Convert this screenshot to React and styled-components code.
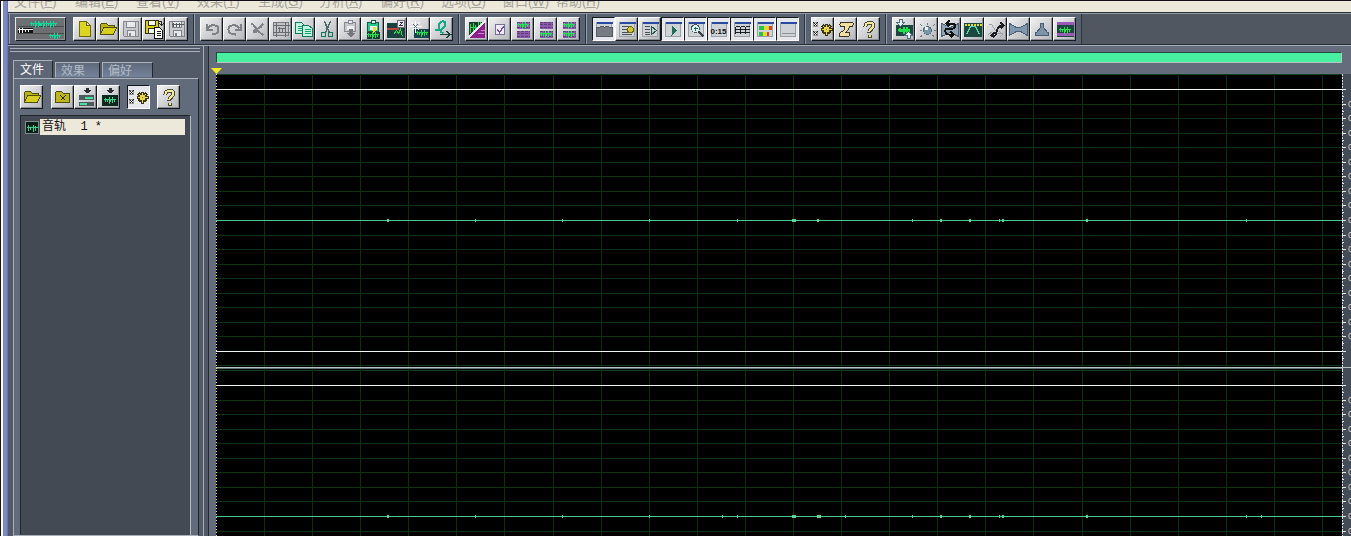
import React from "react";
import styled, { createGlobalStyle } from "styled-components";

const GlobalStyle = createGlobalStyle`
  * {
    box-sizing: border-box;
  }
  body {
    margin: 0;
    overflow: hidden;
    background: #505864;
    font-family: "Liberation Sans", "Noto Sans CJK SC", sans-serif;
  }
  button {
    margin: 0;
    padding: 0;
    border: none;
    font-family: inherit;
  }
`;

const Window = styled.div`
  display: flex;
  flex-direction: column;
  height: 100vh;
  overflow: hidden;
  border-top: 1px solid #14101c;
  border-left: 1px solid #14101c;
`;
const Body = styled.div`
  flex: 1;
  display: flex;
  min-height: 0;
`;
const Frame = styled.div`
  width: 7px;
  flex-shrink: 0;
  background-color: #7d87c6;
  border-left: 2px solid #ffffff;
  border-right: 1px solid #6a72ac;
`;
const Main = styled.div`
  flex: 1;
  min-width: 0;
  display: flex;
  flex-direction: column;
`;

const MenuBar = styled.nav`
  display: flex;
  align-items: flex-end;
  height: 12px;
  flex-shrink: 0;
  overflow: hidden;
  padding: 0 0 1px 6px;
  background-color: #ece8da;
  border-bottom: 1px solid #2c3038;
`;
const MenuItem = styled.button`
  width: ${(props) => (props.$narrow ? 54 : 61)}px;
  flex-shrink: 0;
  background: none;
  color: #a5a299;
  font-size: 13px;
  line-height: 18px;
  text-align: left;
  white-space: nowrap;
`;

const Toolbar = styled.div`
  display: flex;
  flex-shrink: 0;
  padding-left: 1px;
  background-color: #505760;
  border-top: 1px solid #9299a3;
  border-bottom: 1px solid #2b3038;
`;
const ToolGroup = styled.div`
  display: flex;
  padding: 3px 5px;
  background-color: #586270;
  border-left: 1px solid #9099a6;
  border-right: 1px solid #2f353f;
`;
const ToolButton = styled.button`
  display: flex;
  align-items: center;
  justify-content: center;
  width: 23px;
  height: 24px;
  flex-shrink: 0;
  margin-right: ${(props) => props.$gap || 0}px;
  background: ${(props) =>
    props.$pressed ? "#e6e7ec" : "linear-gradient(135deg, #f1f1f2, #b3b6ba)"};
  border: 1px solid;
  border-color: ${(props) =>
    props.$pressed
      ? "#15181d #ffffff #ffffff #15181d"
      : "#ffffff #15181d #15181d #ffffff"};
  box-shadow: ${(props) =>
    props.$pressed ? "none" : "inset -1px -1px 0 #8d9197"};
`;
const SessionButton = styled(ToolButton)`
  width: 51px;
  margin-right: 7px;
  background: #6d6f72;
  border-color: #e4e6e8 #15181d #15181d #e4e6e8;
`;

const Workspace = styled.div`
  flex: 1;
  display: flex;
  min-height: 0;
  border-top: 1px solid #a3abb5;
`;
const Sidebar = styled.aside`
  display: flex;
  flex-direction: column;
  width: 196px;
  flex-shrink: 0;
  padding-top: 2px;
  background-color: #515a66;
  border-right: 1px solid #a9b0ba;
`;
const Grip = styled.div`
  height: 4px;
  margin: 0 3px 8px 2px;
  border-top: 1px solid #a9b0ba;
  border-bottom: 1px solid #a9b0ba;
`;
const Tabs = styled.div`
  display: flex;
  align-items: flex-end;
  gap: 2px;
  padding-left: 5px;
`;
const Tab = styled.button`
  width: ${(props) => props.$width}px;
  height: ${(props) => (props.$active ? 19 : 16)}px;
  margin-bottom: ${(props) => (props.$active ? -1 : 0)}px;
  padding-left: ${(props) => (props.$active ? 6 : 5)}px;
  color: ${(props) => (props.$active ? "#ffffff" : "#b3bcc8")};
  background: ${(props) =>
    props.$active ? "#5d6675" : "linear-gradient(#5f6a7b, #75829a)"};
  border: 1px solid;
  border-color: #a9b0ba #22272f transparent #a9b0ba;
  font-size: 12px;
  line-height: 16px;
  text-align: left;
`;
const Panel = styled.div`
  flex: 1;
  display: flex;
  flex-direction: column;
  min-height: 0;
  margin: 0 4px 0 5px;
  padding: 6px 7px 0 6px;
  background-color: #616b79;
  border: 1px solid;
  border-color: #a9b0ba #1d2229 #a9b0ba #a9b0ba;
`;
const PanelTools = styled.div`
  display: flex;
  margin-bottom: 6px;
`;
const FileList = styled.div`
  flex: 1;
  padding: 3px 5px 0 4px;
  background-color: #434a53;
  border-top: 1px solid #20252c;
  border-left: 1px solid #20252c;
  border-right: 1px solid #b4bac2;
`;
const FileRow = styled.div`
  display: flex;
  align-items: center;
  gap: 1px;
`;
const FileName = styled.span`
  flex: 1;
  height: 16px;
  padding-left: 2px;
  background-color: #ece8da;
  color: #111111;
  font-family: "Liberation Mono", "Noto Sans CJK SC", monospace;
  font-size: 12px;
  line-height: 17px;
  white-space: pre;
`;
const Splitter = styled.div`
  width: 5px;
  flex-shrink: 0;
  background-color: #505865;
  border-right: 1px solid #23282f;
`;

const Editor = styled.main`
  flex: 1;
  min-width: 0;
  display: flex;
  flex-direction: column;
  background-color: #656d7d;
`;
const Overview = styled.div`
  height: 11px;
  flex-shrink: 0;
  margin: 6px 9px 0 7px;
  background-color: #47f0a1;
  border: 1px solid;
  border-color: #23483c #b7c4c0 #b7c4c0 #23483c;
`;
const MarkerRow = styled.div`
  display: flex;
  align-items: flex-end;
  height: 11px;
  flex-shrink: 0;
  padding-left: 2px;
`;
const Tracks = styled.div`
  flex: 1;
  min-height: 0;
  overflow: hidden;
  padding-left: 7px;
`;
const Track = styled.div`
  display: flex;
  height: 296px;
`;
const Wave = styled.svg`
  flex: 1;
  min-width: 0;
  height: 100%;
  background-color: #000000;
`;
const Scale = styled.svg`
  width: 9px;
  flex-shrink: 0;
  height: 100%;
  background-color: #434b56;
`;

const dark = "#173f34";
const green = "#18a26c";
const yellow = "#d5cf16";

// a short burst of waveform centred on y
const burst = (x, y) =>
  `M${x} ${y}h12M${x + 2} ${y - 2}v4M${x + 4} ${y - 1}v3M${x + 6} ${y - 3}v7M${
    x + 7
  } ${y - 1}v3M${x + 9} ${y - 3}v6M${x + 11} ${y - 1}v3`;

const FolderShape = () => (
  <>
    <path d="M2 15V5l1-1h5l2 2h6v3" fill="#b9b411" stroke="#504d0b" />
    <path d="M2 15l3-7h13l-3 7z" fill="#d6d01d" stroke="#504d0b" />
  </>
);
const Floppy = ({ fill, stroke }) => (
  <>
    <path d="M2 2h15v15H3l-1-1z" fill={fill} stroke={stroke} />
    <path d="M5 2h9v6H5zM6 11h8v6H6z" fill="#e8e9eb" stroke={stroke} />
    <path d="M8 13v3" stroke={stroke} strokeWidth="2" />
  </>
);
const MiniWindow = ({ children }) => (
  <>
    <path d="M2 3h15v14H2z" fill="#d0d3d6" stroke="#9ba0a7" />
    <path d="M2 2h16v2H2z" fill="#284aa0" />
    {children}
  </>
);
const Bricks = ({ top, bottom }) => (
  <>
    <path d="M3 2h13v7H3zM3 11h13v7H3z" fill="#8a5baa" />
    <path
      d="M3 3h13M3 5h13M3 8h13M3 12h13M3 14h13M3 17h13"
      stroke="#5f3a7d"
      strokeDasharray="3 1"
    />
    {top && <path d={burst(3, 5)} stroke="#20e450" />}
    {bottom && <path d={burst(3, 14)} stroke="#20e450" />}
  </>
);
const Gear = () => (
  <>
    <path d="M0 3h4v4H0zM0 12h4v4H0z" fill="#fff" stroke="#999" />
    <path d="M0 3l4 4m0-4l-4 4M0 12l4 4m0-4l-4 4" stroke="#222" />
    <path
      d="M13 4v12M7 10h12M9 6l8 8M9 14l8-8"
      stroke="#3d360e"
      strokeWidth="3"
    />
    <path d="M13 5v10M8 10h10M10 7l6 6M10 13l6-6" stroke="#e9da45" />
    <circle cx="13" cy="10" r="3" fill="#e9da45" />
    <circle cx="13" cy="10" r="1" fill="#7a6d1d" />
  </>
);
const HelpShape = () => (
  <>
    <path
      d="M6 7c0-5 8-5 8-1 0 3-4 3-4 7M10 15v3"
      stroke="#4b4830"
      strokeWidth="4"
    />
    <path
      d="M6 7c0-5 8-5 8-1 0 3-4 3-4 6M10 15v2"
      stroke="#f0e99c"
      strokeWidth="2"
    />
  </>
);
const Clipboard = ({ fill, stroke }) => (
  <>
    <path d="M4 3h11v9H4z" fill={fill} stroke={stroke} />
    <path d="M8 1h4v3H8z" fill="#eef" stroke={stroke} />
    <path d="M6 6h7v4H6z" fill="#eee" />
  </>
);

const icons = {
  newFile: (
    <path d="M4 2h7l4 4v11H4zM11 2v4h4" fill="#dcd51c" stroke="#6c690d" />
  ),
  open: <FolderShape />,
  save: <Floppy fill="#c6c8cb" stroke="#85898f" />,
  saveAs: (
    <>
      <path d="M1 1h13v13H1z" fill={yellow} stroke="#35340e" />
      <path d="M4 1h7v5H4zM4 9h6v5H4z" fill="#f5f5f5" stroke="#35340e" />
      <path d="M10 8h5l3 3v8h-8z" fill="#fff" stroke="#111" />
      <path d="M12 12h4M12 14h4M12 16h4M14 2h3v4M15 4l2 2 2-2" stroke="#222" />
    </>
  ),
  saveAll: (
    <>
      <Floppy fill="#c9cbce" stroke="#7d8187" />
      <path d="M4 5h12M6 3v4M9 3v4M12 3v4" stroke="#555960" />
    </>
  ),
  undo: (
    <path
      d="M4 4v6h6M5 9c3-5 11-4 11 1 0 4-4 5-7 5"
      stroke="#7e8287"
      strokeWidth="2"
    />
  ),
  redo: (
    <path
      d="M15 4v6H9M14 9c-3-5-11-4-11 1 0 4 4 5 7 5"
      stroke="#7e8287"
      strokeWidth="2"
    />
  ),
  repeat: (
    <path
      d="M2 4c4 0 4 5 7 5 3 0 4-4 6-5M13 7L6 11c-2 2 1 3 3 0l6 5"
      stroke="#7e8287"
      strokeWidth="2"
    />
  ),
  trim: (
    <>
      <path d="M2 3h15v13H2z" fill="#bfc1c4" stroke="#777b81" />
      <path
        d="M1 6h17M1 13h17M5 2v15M14 2v15M6 9h8M8 7v5M11 8v4"
        stroke="#686c72"
      />
    </>
  ),
  copy: (
    <>
      <path d="M1 3h6l3 3v8H1z" fill="#c4f4e4" stroke="#127a5a" />
      <path d="M3 7h5M3 9h5M3 11h5" stroke={green} />
      <path d="M8 6h6l4 3v8H8z" fill="#c4f4e4" stroke="#127a5a" />
      <path d="M10 10h6M10 12h6M10 14h6" stroke={green} />
    </>
  ),
  cut: (
    <>
      <path d="M7 2l5 11M13 2L8 13" stroke="#48676a" strokeWidth="1.5" />
      <circle cx="6" cy="15" r="2.2" stroke="#14745a" strokeWidth="1.5" />
      <circle cx="13" cy="15" r="2.2" stroke="#14745a" strokeWidth="1.5" />
    </>
  ),
  paste: (
    <>
      <Clipboard fill="#c6c8cb" stroke="#85898f" />
      <path d="M8 9h4v4h3l-5 5-5-5h3z" fill="#74787e" />
    </>
  ),
  pasteNew: (
    <>
      <Clipboard fill="#28c98e" stroke="#125c44" />
      <path d="M3 12h13v7H3z" fill={dark} />
      <path d="M9 7h3v3h2l-4 3-3-3h2z" fill="#e8dd31" />
      <path d={burst(3, 15)} stroke="#22df4b" />
    </>
  ),
  mixPaste: (
    <>
      <path d="M0 3h18v15H0z" fill="#19423e" />
      <path d="M0 9h12" stroke="#b94639" strokeWidth="2" />
      <path d="M7 15l3-4 2 3 2-4 2 7" stroke="#26da50" />
      <path d="M11 1h7v7h-7z" fill="#ececf0" stroke="#667" />
      <path d="M13 3h3l-3 3h3" stroke="#334" />
    </>
  ),
  noise: (
    <>
      <path d="M4 9h15v9H4z" fill="#18444e" />
      <path d="M6 1v12M0 7h12M2 3l8 8M2 11l8-8" stroke="#fff" />
      <path d="M4 5l4 4m0-4L4 9" stroke="#557082" />
      <path d={burst(6, 13)} stroke="#25de4c" />
    </>
  ),
  convert: (
    <>
      <path
        d="M3 10c8 3 13-7 8-8-5-1-7 8 0 12"
        stroke="#18a985"
        strokeWidth="2"
      />
      <path d="M7 15h11M14 12l4 3-4 3" stroke={dark} strokeWidth="1.5" />
    </>
  ),
  spectral: (
    <>
      <path d="M1 2h16v16H1z" fill="#193d2f" />
      <path d="M17 2v16H1z" fill="#8b208b" />
      <path d="M2 8h8M3 4v9M6 3v8M8 5v5M11 2v4M13 2v2" stroke="#28db50" />
      <path d="M18 1L1 18" stroke="#f2e8f4" strokeWidth="2" />
      <path d="M10 14h6M13 11h4" stroke="#d980dd" />
    </>
  ),
  check: (
    <>
      <path d="M5 5h9v10H5z" fill="#eeeafa" stroke="#777095" />
      <path d="M7 10l2 3 4-6" stroke="#6e4b98" strokeWidth="1.5" />
    </>
  ),
  bricksTop: <Bricks top />,
  bricksBottom: <Bricks bottom />,
  bricksBoth: <Bricks top bottom />,
  winTabs: (
    <>
      <MiniWindow />
      <path d="M2 8h3l1-1h3l1 1 1-1h3l1 1h3v9H2z" fill="#777c83" stroke="#555b63" />
    </>
  ),
  winCue: (
    <MiniWindow>
      <path d="M4 7h7M4 10h6M4 13h10M4 15h10" stroke="#4a5058" />
      <circle cx="13" cy="10" r="3" fill="#cfc72b" stroke="#6b6714" />
    </MiniWindow>
  ),
  winPlay: (
    <MiniWindow>
      <path d="M4 7h5M4 10h5M4 13h5M4 15h5" stroke="#4a5058" />
      <path d="M11 7l5 4-5 4z" fill="#bfd6cc" stroke="#2a5448" />
    </MiniWindow>
  ),
  transport: (
    <MiniWindow>
      <path d="M8 6l6 5-6 5z" fill="#187458" />
    </MiniWindow>
  ),
  zoomer: (
    <MiniWindow>
      <circle cx="9" cy="9" r="4" fill="#dff0f0" stroke="#3e5a60" />
      <path d="M7 9h4M9 7v4" stroke="#187458" />
      <path d="M12 12l5 5" stroke="#333b44" strokeWidth="2" />
    </MiniWindow>
  ),
  timer: (
    <MiniWindow>
      <text
        x="9"
        y="14"
        textAnchor="middle"
        fontFamily="Liberation Sans"
        fontWeight="bold"
        fontSize="8"
        fill="#111"
      >
        0:15
      </text>
    </MiniWindow>
  ),
  selection: (
    <MiniWindow>
      <path
        d="M3 7h4M8 7h4M13 7h4M3 10h4M8 10h4M13 10h4M3 13h4M8 13h4M13 13h4M3 7v7M8 7v7M13 7v7"
        stroke="#1b1f25"
      />
    </MiniWindow>
  ),
  levels: (
    <MiniWindow>
      <path d="M3 6h5v4H3zM3 12h4v4H3z" fill="#25c34a" />
      <path d="M8 6h5v4H8zM7 12h4v4H7z" fill="#e6dc27" />
      <path d="M13 6h3v4h-3zM11 12h2v4h-2z" fill="#dc3a2a" />
    </MiniWindow>
  ),
  status: (
    <MiniWindow>
      <path d="M3 14h14" stroke="#8c9198" />
    </MiniWindow>
  ),
  settings: <Gear />,
  script: (
    <path
      d="M5 3h10c3 0 2 4 0 4h-2c0 4-3 4-4 6h3c2 0 2 4-1 4H4c-2 0-2-3 0-4 4-2 4-3 4-6H5C3 7 3 3 5 3z"
      fill="#f0dfa2"
      stroke="#3c3522"
    />
  ),
  help: <HelpShape />,
  amplify: (
    <>
      <path d="M1 5h17v11H1z" fill="#1b4740" />
      <path d={burst(3, 10)} stroke="#21e04a" strokeWidth="2" />
      <path d="M5 0h3v3h2l-4 4-4-4h3z" fill="#e9f4f6" stroke="#4d6a80" />
      <path d="M13 19h3v-3h2l-4-4-4 4h3z" fill="#e9f4f6" stroke="#4d6a80" />
    </>
  ),
  bulb: (
    <>
      <circle cx="10" cy="11" r="4" fill="#7895a4" stroke="#526b79" />
      <circle cx="9" cy="9" r="1.5" fill="#eaf5f8" />
      <path
        d="M10 3v2M2 11h2M16 11h2M3 5l2 2M17 5l-2 2M3 17l2-1M17 17l-2-1"
        stroke="#6b7f8b"
      />
    </>
  ),
  flange: (
    <>
      <path d="M1 4l9 4 8-4v13l-8-4-9 4z" fill="#8ea2b5" stroke="#4b6075" />
      <path
        d="M9 1L6 4l3 3M6 4h5c5 0 4 5 1 5H7c-3 0-3 6 1 6h5M10 12l3 3-3 3"
        stroke="#111"
        strokeWidth="2"
      />
    </>
  ),
  filter: (
    <>
      <path d="M0 3h18v14H0z" fill="#1b4740" />
      <path d="M1 5h17" stroke="#e2df33" strokeWidth="2" strokeDasharray="2 1" />
      <path d="M3 15l4-8h5l4 8" stroke="#55d59b" />
    </>
  ),
  shuffle: (
    <>
      <path d="M2 5h3l6 9h5M13 12l3 3-3 3M2 15l4-3" stroke="#9aa0a6" />
      <path
        d="M5 16h3c3 0 1-10 7-10h2M14 3l3 3-3 3M8 13l-3 3 3 2"
        stroke="#1b1e22"
        strokeWidth="2"
      />
    </>
  ),
  stretch: (
    <path d="M0 4l7 4h4l7-4v12l-7-4H7l-7 4z" fill="#8097ad" stroke="#4b6075" />
  ),
  pitch: (
    <path d="M8 4h3v4l4 5h1v3H3v-3h1l4-5z" fill="#7d93a8" stroke="#485d72" />
  ),
  multitrack: (
    <>
      <path d="M1 3h17v14H1z" fill="#1b4740" />
      <path d="M1 4h17M1 15h17" stroke="#9a58b7" strokeWidth="3" />
      <path d={burst(3, 10)} stroke="#22e24b" />
    </>
  ),
  closeFile: (
    <>
      <path d="M2 15V5l1-1h5l2 2h6v9z" fill="#bdb817" stroke="#504d0b" />
      <path d="M7 8l5 5m0-5l-5 5" stroke="#282700" />
    </>
  ),
  insertTrack: (
    <>
      <path d="M9 0h3v2h3l-4 4-5-4h3z" fill="#2a2e33" />
      <path d="M2 7h15v5H2zM2 14h15v4H2z" fill="#4e5a5c" />
      <path d="M8 10h8M3 16h7" stroke="#40e3a2" strokeWidth="2" />
    </>
  ),
  editWave: (
    <>
      <path d="M9 0h3v2h3l-4 4-5-4h3z" fill="#2a2e33" />
      <path d="M2 7h16v11H2z" fill="#11261f" />
      <path d={burst(4, 12)} stroke="#2bd98c" />
    </>
  ),
};

const menus = [
  ["文件", "F"],
  ["编辑", "E"],
  ["查看", "V"],
  ["效果", "T"],
  ["生成", "G"],
  ["分析", "A"],
  ["偏好", "R"],
  ["选项", "O"],
  ["窗口", "W"],
  ["帮助", "H"],
];

const groups = [
  ["newFile", "open", "save", "saveAs", "saveAll"],
  [
    "undo",
    "redo",
    "repeat",
    "trim",
    "copy",
    "cut",
    "paste",
    "pasteNew",
    "mixPaste",
    "noise",
    "convert",
  ],
  ["spectral", "check", "bricksTop", "bricksBottom", "bricksBoth"],
  [
    "winTabs",
    "winCue",
    "winPlay",
    "transport",
    "zoomer",
    "timer",
    "selection",
    "levels",
    "status",
  ],
  ["settings", "script", "help"],
  [
    "amplify",
    "bulb",
    "flange",
    "filter",
    "shuffle",
    "stretch",
    "pitch",
    "multitrack",
  ],
];
const pressed = [
  "winTabs",
  "transport",
  "zoomer",
  "timer",
  "selection",
  "levels",
  "status",
];

const panelTools = [
  { icon: "open", gap: 8 },
  { icon: "closeFile" },
  { icon: "insertTrack" },
  { icon: "editWave", gap: 7 },
  { icon: "settings", gap: 7, on: true },
  { icon: "help" },
];

// [x, half height, width] of every click in the recording
const leftClicks = [
  [171, 1, 2],
  [259, 1, 1],
  [346, 1, 1],
  [433, 1, 1],
  [521, 1, 1],
  [576, 1, 4],
  [601, 1, 2],
  [696, 1, 1],
  [724, 1, 2],
  [753, 1, 2],
  [783, 1, 1],
  [786, 1, 2],
  [870, 1, 2],
  [1030, 1, 1],
];
const rightClicks = [
  ...leftClicks,
  [506, 1, 1],
  [629, 1, 1],
  [603, 1, 2],
  [1045, 1, 1],
];

const steps = [-9, -8, -7, -6, -5, -4, -3, -2, -1, 0, 1, 2, 3, 4, 5, 6, 7, 8, 9];
const yOf = (n) => Math.round(146 + (n * 131) / 9);

const Icon = ({ name }) => (
  <svg
    width="20"
    height="20"
    viewBox="-0.5 -0.5 20 20"
    fill="none"
    shapeRendering="crispEdges"
  >
    {icons[name]}
  </svg>
);

const SessionIcon = () => (
  <svg
    width="47"
    height="20"
    viewBox="-0.5 -0.5 47 20"
    fill="none"
    shapeRendering="crispEdges"
  >
    <path d="M0 7h47M0 14h47" stroke="#484a4c" />
    <path d="M0 8h15v5H0z" fill="#111" />
    <path d={burst(12, 4)} stroke="#12d69a" />
    <path d={burst(20, 4)} stroke="#12d69a" />
    <path d={burst(27, 4)} stroke="#12d69a" />
    <path d="M0 10h15M2 8v5M5 8v5M8 9v3M11 9v3" stroke="#fff" />
    <path d={burst(31, 16)} stroke="#12d69a" />
  </svg>
);

const Channel = ({ clicks }) => (
  <Track>
    <Wave
      viewBox="0 0 1126 296"
      preserveAspectRatio="none"
      shapeRendering="crispEdges"
    >
      <rect width="1126" height="1" fill="#14401f" />
      {Array.from({ length: 23 }, (_, i) => (
        <rect
          key={i}
          x={Math.round(48 + i * 48.09)}
          width="1"
          height="296"
          fill="#0b2f0f"
        />
      ))}
      {steps.map((n) => (
        <rect
          key={n}
          y={yOf(n)}
          width="1126"
          height="1"
          fill={Math.abs(n) === 9 ? "#eef5ee" : "#0b3310"}
        />
      ))}
      <rect y="146" width="1126" height="1" fill="#4bc98c" />
      {clicks.map(([x, h, w], i) => (
        <rect
          key={i}
          x={x}
          y={146 - h}
          width={w}
          height={h * 2 + 1}
          fill="#5ad69a"
        />
      ))}
      <rect y="291" width="1126" height="1" fill="#12301a" />
      <rect y="293" width="1126" height="1" fill="#b5c4c0" />
      <rect y="294" width="1126" height="1" fill="#62736f" />
      <path d="M0.5 0v296" stroke="#f0ee3c" strokeDasharray="1 2" />
    </Wave>
    <Scale viewBox="0 0 9 296" shapeRendering="crispEdges">
      <path d="M0.5 0v296" stroke="#d6dade" strokeDasharray="2 1" />
      {steps.map((n) => (
        <g key={n} fill="#e6e8ea">
          <rect y={yOf(n)} width="4" height="1" />
          <rect y={yOf(n) + 7} width="2" height="1" />
        </g>
      ))}
      {steps.slice(1, -1).map((n) => (
        <text
          key={n}
          x="6"
          y={yOf(n) + 3}
          fontFamily="Liberation Sans"
          fontSize="9"
          fill="#dccdbd"
        >
          0
        </text>
      ))}
      <path d="M0 293.5h9" stroke="#b5c4c0" />
    </Scale>
  </Track>
);

const App = () => {
  return (
    <Window>
      <GlobalStyle />
      <Body>
        <Frame />
        <Main>
          <MenuBar>
            {menus.map(([label, key]) => (
              <MenuItem key={key} $narrow={key === "W"}>
                {label}(<u>{key}</u>)
              </MenuItem>
            ))}
          </MenuBar>
          <Toolbar>
            {groups.map((group, i) => (
              <ToolGroup key={i}>
                {i === 0 && (
                  <SessionButton aria-label="session">
                    <SessionIcon />
                  </SessionButton>
                )}
                {group.map((name) => (
                  <ToolButton
                    key={name}
                    aria-label={name}
                    $pressed={pressed.includes(name)}
                  >
                    <Icon name={name} />
                  </ToolButton>
                ))}
              </ToolGroup>
            ))}
          </Toolbar>
          <Workspace>
            <Sidebar>
              <Grip />
              <Tabs>
                <Tab $active $width={40}>
                  文件
                </Tab>
                <Tab $width={45}>效果</Tab>
                <Tab $width={51}>偏好</Tab>
              </Tabs>
              <Panel>
                <PanelTools>
                  {panelTools.map(({ icon, gap, on }) => (
                    <ToolButton
                      key={icon}
                      aria-label={icon}
                      $gap={gap}
                      $pressed={on}
                    >
                      <Icon name={icon} />
                    </ToolButton>
                  ))}
                </PanelTools>
                <FileList>
                  <FileRow>
                    <svg
                      width="14"
                      height="13"
                      viewBox="-0.5 -0.5 14 13"
                      fill="none"
                      shapeRendering="crispEdges"
                    >
                      <path d="M0 0h13v12H0z" fill="#0c1c17" stroke="#7a8f8a" />
                      <path
                        d="M1 6h12M3 3v6M5 5v3M8 3v7M10 4v5"
                        stroke="#2fd48d"
                      />
                    </svg>
                    <FileName>{"音轨  1 *"}</FileName>
                  </FileRow>
                </FileList>
              </Panel>
            </Sidebar>
            <Splitter />
            <Editor>
              <Overview />
              <MarkerRow>
                <svg width="11" height="6" viewBox="0 0 11 6">
                  <path d="M0 0h11L5.5 6z" fill="#f4ef1d" />
                </svg>
              </MarkerRow>
              <Tracks>
                <Channel clicks={leftClicks} />
                <Channel clicks={rightClicks} />
              </Tracks>
            </Editor>
          </Workspace>
        </Main>
      </Body>
    </Window>
  );
};

export default App;
